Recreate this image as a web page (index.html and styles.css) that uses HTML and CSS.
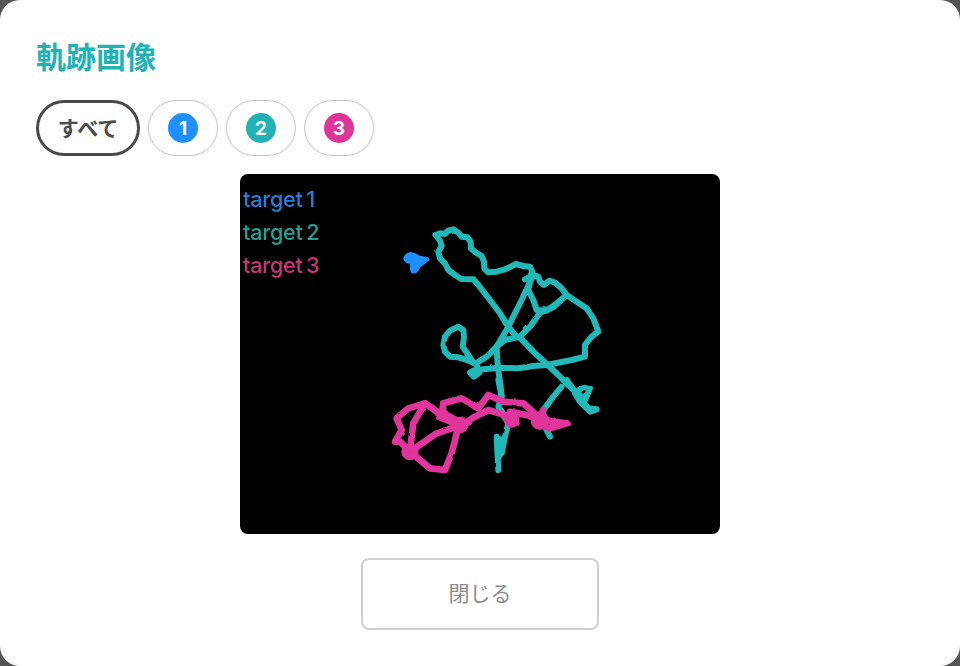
FILE: index.html
```html
<!DOCTYPE html>
<html lang="ja">
<head>
<meta charset="utf-8">
<title>軌跡画像</title>
<link rel="stylesheet" href="styles.css">
</head>
<body>
<main class="modal">
  <h1 class="title">軌跡画像</h1>
  <div class="tabs">
    <button class="tab tab-active">すべて</button>
    <button class="tab"><span class="badge badge-blue">1</span></button>
    <button class="tab"><span class="badge badge-teal">2</span></button>
    <button class="tab"><span class="badge badge-pink">3</span></button>
  </div>
  <div class="picture">
    <svg class="track" viewBox="240 174 480 360" width="480" height="360" xmlns="http://www.w3.org/2000/svg">
      <defs>
        <filter id="wobble" x="-5%" y="-5%" width="110%" height="110%">
          <feTurbulence type="fractalNoise" baseFrequency="0.1" numOctaves="1" seed="4"/>
          <feDisplacementMap in="SourceGraphic" scale="2.5"/>
        </filter>
      </defs>
      <text class="label label-blue" x="243" y="207">target 1</text>
      <text class="label label-teal" x="243" y="240">target 2</text>
      <text class="label label-pink" x="243" y="273">target 3</text>
      <path class="blob" transform="translate(390 220) scale(.3333)" d="M46 115 Q50 104 62 102 Q74 104 84 112 L112 118 Q100 128 86 138 Q78 158 68 154 Q64 142 66 126 Q48 126 46 115Z"/>
      <g filter="url(#wobble)">
        <g class="line line-teal" transform="translate(390 220) scale(.3333)">
          <path d="M137 45 L150 40 L165 42 L175 32 L190 28 L205 38 L215 50 L232 52 L242 65 L243 85 L258 98 L275 108 L282 125 L283 145 L295 157 L320 155 L345 148 L362 140 L378 132 L400 138 L420 140 L427 155 L420 170 L405 178"/>
          <path d="M137 45 L150 62 L155 78 L145 95 L150 115 L165 130 L175 150 L195 165 L215 178 L235 178 L250 178 L265 195 L300 240 L330 280 L355 320 L375 345 L395 358 L430 395 L470 432 L510 470 L545 505 L570 525"/>
          <path d="M430 165 L395 240 L355 320 L335 355 L320 380 L322 420 L325 450 L332 500 L335 530"/>
          <path d="M430 165 L445 170 L450 185 L462 195 L478 182 L495 188 L515 205 L530 225 L560 245 L590 265 L610 295 L625 335 L605 350 L585 375 L585 410 L545 420 L470 435 L430 438 L385 445 L330 443 L255 450 L240 458 L252 470 L268 458 L258 430 L290 410 L320 380 L345 360 L390 350 L420 320 L450 278 L490 262 L530 225"/>
          <path d="M425 160 L415 210 L430 240 L440 270 L470 272 L500 250 L530 225"/>
          <path d="M258 432 L225 418 L205 412 L180 410 L165 395 L160 375 L165 350 L180 332 L205 320 L220 330 L222 352 L218 380 L235 405 L248 425"/>
        </g>
        <g class="line line-teal" transform="translate(380 380) scale(.3333)">
          <path d="M355 0 L365 50 L355 80 L385 130 L375 170 L365 220 L350 170 L355 270"/>
          <path d="M360 225 L368 180 L352 175 L356 230"/>
          <path d="M560 0 L585 35 L625 85 L650 88 L630 95 L600 65 L585 40 L610 20 L630 25 L620 50 L610 70"/>
          <path d="M545 20 L520 50 L490 90 L490 130 L510 170"/>
        </g>
        <g class="line line-pink" transform="translate(380 380) scale(.3333)">
          <path d="M90 215 L60 185 L45 185 L65 150 L50 115 L85 85 L135 70 L185 105 L205 110 L245 135 L285 110 L325 90 L375 105 L395 120 L390 95 L440 105 L480 120"/>
          <path d="M190 70 L245 55 L295 85 L325 45 L370 65 L430 70 L480 115 L520 125 L560 130 L510 145 L470 130 L490 90"/>
          <path d="M245 135 L170 160 L90 215 L150 265 L195 270 L215 220 L225 180 L235 140 L185 105 L190 70"/>
          <path d="M90 215 L95 170 L100 130 L135 70"/>
          <path d="M170 95 L245 135 L210 110 L235 125"/>
          <path d="M175 110 L225 130 L190 95"/>
          <circle cx="395" cy="120" r="13"/>
          <circle cx="240" cy="135" r="15"/>
          <circle cx="90" cy="215" r="16"/>
          <circle cx="480" cy="122" r="18"/>
        </g>
      </g>
    </svg>
  </div>
  <button class="close">閉じる</button>
</main>
</body>
</html>
```
FILE: styles.css
```css
* { box-sizing: border-box; }
html, body { margin: 0; height: 100%; }
body {
  background: #555;
  font-family: "Noto Sans CJK JP", "Noto Sans", sans-serif;
  overflow: hidden;
}
.modal {
  width: 960px;
  height: 666px;
  padding: 36px;
  background: #fff;
  border-radius: 20px;
  display: flex;
  flex-direction: column;
}
.title {
  margin: 0;
  height: 40px;
  font-size: 30px;
  line-height: 38px;
  font-weight: 700;
  color: #20b2b5;
}
.tabs {
  display: flex;
  gap: 8px;
  margin-top: 24px;
}
.tab {
  width: 70px;
  height: 56px;
  padding: 0;
  display: flex;
  align-items: center;
  justify-content: center;
  background: #fff;
  border: 1.5px solid #c4c4c4;
  border-radius: 28px;
  font-family: inherit;
}
.tab-active {
  width: 104px;
  border: 3px solid #4a4a4a;
  font-size: 21px;
  font-weight: 700;
  color: #4a4a4a;
  padding-bottom: 2px;
}
.badge {
  width: 30px;
  height: 30px;
  border-radius: 50%;
  display: flex;
  align-items: center;
  justify-content: center;
  color: #fff;
  font-family: Inter, sans-serif;
  font-size: 19px;
  font-weight: 700;
}
.badge-blue { background: #1e90ff; }
.badge-teal { background: #20b2b5; }
.badge-pink { background: #e0349a; }
.picture {
  align-self: center;
  width: 480px;
  height: 360px;
  margin-top: 18px;
  background: #000;
  border-radius: 8px;
  overflow: hidden;
}
.track { display: block; filter: blur(0.5px); }
.label {
  font-family: Inter, sans-serif;
  font-size: 21.5px;
  font-weight: 500;
  letter-spacing: -0.2px;
  word-spacing: -2px;
}
.label-blue { fill: #2080e0; }
.label-teal { fill: #1fa398; }
.label-pink { fill: #d0307f; }
.blob { fill: #1e90ff; stroke: #1e90ff; stroke-width: 12; stroke-linejoin: round; }
.line {
  fill: none;
  stroke-width: 18;
  stroke-linejoin: round;
  stroke-linecap: round;
}
.line-teal { stroke: #20b8b8; }
.line-pink { stroke: #e0349a; stroke-width: 20; }
.line-pink circle { fill: #e0349a; }
.close {
  align-self: center;
  width: 238px;
  height: 72px;
  margin-top: 24px;
  padding: 0 0 5px;
  background: #fff;
  border: 2px solid #cfcfcf;
  border-radius: 8px;
  font-family: inherit;
  font-size: 21px;
  color: #8c8c8c;
}
```
